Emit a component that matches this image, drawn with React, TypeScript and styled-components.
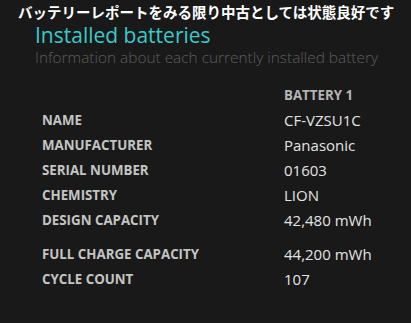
import React from 'react';
import styled, { createGlobalStyle } from 'styled-components';

const GlobalStyle = createGlobalStyle`
  html, body {
    margin: 0;
    padding: 0;
    background-color: #191919;
  }
`;

const Page = styled.div`
  width: 411px;
  height: 323px;
  background-color: #191919;
  overflow: hidden;
  font-family: 'Open Sans', 'Noto Sans', sans-serif;
`;

const Caption = styled.div`
  padding: 1px 0 0 18px;
  font-family: 'Noto Sans CJK JP', sans-serif;
  font-size: 14.5px;
  font-weight: 700;
  line-height: 21px;
  color: #ffffff;
  white-space: nowrap;
`;

const Heading = styled.div`
  padding-left: 35px;
`;

const Title = styled.h1`
  margin: 0;
  font-size: 21px;
  font-weight: 400;
  line-height: 26px;
  color: #3cc9c9;
`;

const Subtitle = styled.p`
  margin: 0;
  font-size: 15.4px;
  font-weight: 300;
  line-height: 20px;
  color: #5e5e5e;
  white-space: nowrap;
`;

const Table = styled.div`
  margin: 15px 0 0 42px;
  display: grid;
  grid-template-columns: 242px auto;
`;

const Row = styled.div<{ $gap?: boolean }>`
  display: contents;
  & > * {
    margin-top: ${({ $gap }) => ($gap ? '9px' : '0')};
  }
`;

const Label = styled.div`
  font-size: 13.3px;
  font-weight: 700;
  line-height: 25px;
  height: 25px;
  color: #c4c4c4;
  white-space: nowrap;
`;

const ColumnHead = styled(Label)`
  color: #b4b4b4;
`;

const Value = styled.div`
  font-size: 15px;
  font-weight: 400;
  line-height: 25px;
  height: 25px;
  color: #e4e4e4;
  white-space: nowrap;
`;

const rows: { label: string; value: string; gap?: boolean }[] = [
  { label: 'NAME', value: 'CF-VZSU1C' },
  { label: 'MANUFACTURER', value: 'Panasonic' },
  { label: 'SERIAL NUMBER', value: '01603' },
  { label: 'CHEMISTRY', value: 'LION' },
  { label: 'DESIGN CAPACITY', value: '42,480 mWh' },
  { label: 'FULL CHARGE CAPACITY', value: '44,200 mWh', gap: true },
  { label: 'CYCLE COUNT', value: '107' },
];

const App: React.FC = () => {
  return (
    <Page>
      <GlobalStyle />
      <Caption>バッテリーレポートをみる限り中古としては状態良好です</Caption>
      <Heading>
        <Title>Installed batteries</Title>
        <Subtitle>Information about each currently installed battery</Subtitle>
      </Heading>
      <Table>
        <div />
        <ColumnHead>BATTERY 1</ColumnHead>
        {rows.map((r) => (
          <Row key={r.label} $gap={r.gap}>
            <Label>{r.label}</Label>
            <Value>{r.value}</Value>
          </Row>
        ))}
      </Table>
    </Page>
  );
};

export default App;
